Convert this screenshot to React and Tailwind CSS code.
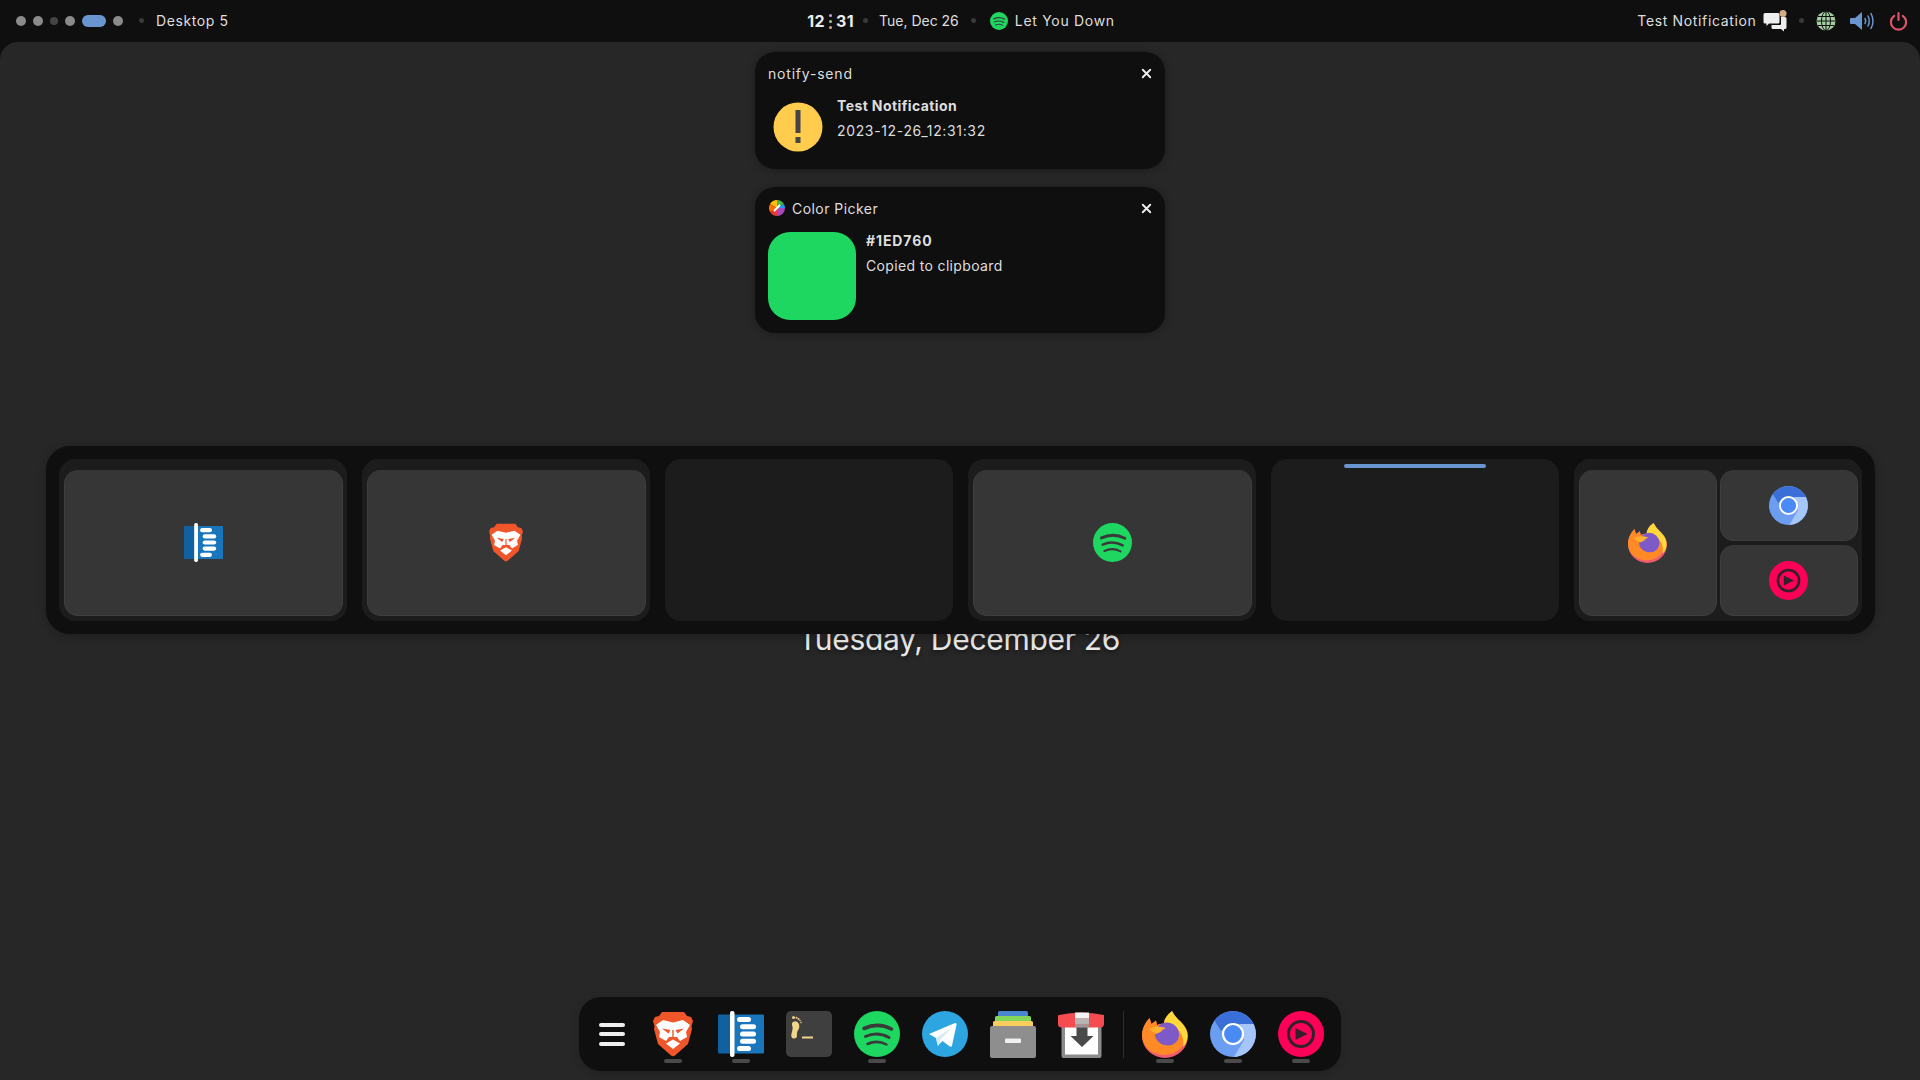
import { X } from "lucide-react"

const BraveIcon = ({ className }) => (
  <svg viewBox="0 0 40 46" className={className}>
    <path fill="#f1562b" d="M9 1H31L34 5L38 6L40 10L38.5 15L39 18L35 33L22 44.5Q20 46 18 44.5L5 33L1 18L1.500 15L0 10L2 6L6 5Z" />
    <path fill="#fff" d="M10 9L20 11.500L30 9L37 14L33 21L34 26L27 30L24 26H16L13 30L6 26L7 21L3 14Z" />
    <path fill="#f1562b" d="M9 17.500L17.500 19L15.500 22.500ZM31 17.500L22.500 19L24.500 22.500ZM19.300 19H20.700V26H19.300Z" />
    <path fill="#fff" d="M13 32.500L20 28.500L27 32.500L20 38Z" />
  </svg>
)

const NotesIcon = ({ className }) => (
  <svg viewBox="0 0 46 46" className={className}>
    <path fill="#11609f" d="M1 3.500H14V42.500H1Q0 42.500 0 41.500V4.500Q0 3.500 1 3.500Z" />
    <path fill="#1a76bc" d="M14 3.500H45Q46 3.500 46 4.500V41.500Q46 42.500 45 42.500H14Z" />
    <rect x="12" y="0" width="4.500" height="46" rx="2" fill="#fff" />
    <rect x="19" y="6" width="14" height="5" rx="2.500" fill="#fff" />
    <rect x="22" y="13.300" width="16" height="5" rx="2.500" fill="#fff" />
    <rect x="22" y="20.500" width="16" height="5" rx="2.500" fill="#fff" />
    <rect x="22" y="27.700" width="16" height="5" rx="2.500" fill="#fff" />
    <rect x="19" y="35" width="14" height="5" rx="2.500" fill="#fff" />
  </svg>
)

const TerminalIcon = ({ className }) => (
  <svg viewBox="0 0 46 46" className={className}>
    <rect width="46" height="46" rx="5" fill="#3f3f3f" />
    <path fill="#f0d58a" d="M7 11Q11 9 13 13Q14 17 11.500 20Q10.500 23 11 25.500Q10.500 28 7 27.500Q4 26 6 21Q7.500 17 6 14Q5.500 12 7 11Z" />
    <circle cx="7.500" cy="6.500" r="1.500" fill="#f0d58a" />
    <circle cx="10.500" cy="6.800" r="1" fill="#f0d58a" />
    <circle cx="12.500" cy="8" r="1" fill="#f0d58a" />
    <circle cx="14" cy="9.500" r=".8" fill="#f0d58a" />
    <circle cx="15" cy="11.500" r=".8" fill="#f0d58a" />
    <rect x="16" y="25.500" width="11" height="2" fill="#f0d58a" />
  </svg>
)

const SpotifyIcon = ({ className }) => (
  <svg viewBox="0 0 46 46" className={className}>
    <circle cx="23" cy="23" r="23" fill="#1ed760" />
    <g fill="none" stroke="#3a3a3a" strokeLinecap="round">
      <path strokeWidth="3.600" d="M10 17.500Q24 11 37.500 18" />
      <path strokeWidth="3" d="M11.500 25.500Q23.500 20 35 26.500" />
      <path strokeWidth="2.500" d="M13.500 33Q23 28.500 32.500 33.500" />
    </g>
  </svg>
)

const TelegramIcon = ({ className }) => (
  <svg viewBox="0 0 46 46" className={className}>
    <circle cx="23" cy="23" r="23" fill="#2ca5e0" />
    <path fill="#fff" d="M7 23L33 12Q35 11.500 34.500 14L30 34.500Q29.500 36.500 27.500 35.300L20.500 30L17 33.500Q16 35.500 15.500 33.500L14 27Z" />
    <path fill="#d5e8f5" d="M14 27L29 17.500L18.500 28.500L17 33.500Q16 35.500 15.500 33.500Z" />
  </svg>
)

const FilesIcon = ({ className }) => (
  <svg viewBox="0 0 46 47" className={className}>
    <path fill="#4a86cf" d="M8 1.500Q8 0 9.500 0H36.500Q38 0 38 1.500V6H8Z" />
    <path fill="#84d65a" d="M5 6.500Q5 5 6.500 5H39.500Q41 5 41 6.500V11H5Z" />
    <path fill="#f9ce5e" d="M3 11.500Q3 10 4.500 10H41.500Q43 10 43 11.500V16H3Z" />
    <rect y="15" width="46" height="32" rx="2" fill="#8e8e8e" />
    <rect x="15" y="27.500" width="16" height="4.500" rx="1" fill="#f0f0f0" />
  </svg>
)

const BoxIcon = ({ className }) => (
  <svg viewBox="0 0 46 47" className={className}>
    <rect x="3.500" y="12" width="40" height="35" rx="2" fill="#8c8c8c" />
    <rect x="7" y="16" width="33" height="27.500" fill="#fff" />
    <path fill="#f44c50" d="M1 4Q12 1.500 23 1.500Q35 1.500 46 4V13Q46 16.500 42 16.500H4Q0 16.500 0 13V5Q0 4 1 4Z" />
    <rect x="17" y="1.500" width="14" height="6" fill="#f4f4f4" />
    <rect x="17" y="7.500" width="14" height="6" fill="#b5b5b5" />
    <rect x="17" y="13.500" width="14" height="3" fill="#9a9a9a" />
    <path fill="#4a4a4a" d="M18.500 16.500H29.500V25H35.500L24 36L12.500 25H18.500Z" />
  </svg>
)

const FirefoxIcon = ({ className }) => (
  <svg viewBox="0 0 46 47" className={className}>
    <path fill="#ef5a6e" d="M7.500 7L9.500 13L14 9.500L15 14Q18 12.500 22 12.500Q22 6 30 0Q33 6 39 11Q46 18 46 25A23 22 0 0 1 0 25Q0 15 7.500 7Z" />
    <path fill="#ff8a26" d="M7.500 7L9.500 13L14 9.500L15 14Q18 12.500 22 12.500L30 14L44 25A22 19.500 0 0 1 0 24Q0 15 7.500 7Z" />
    <path fill="#ffd93b" d="M30 0Q33 6 39 11Q46 18 45.500 26Q45 32 41 36Q43 24 34 17Q27 13 22 12.500Q22 6 30 0Z" />
    <circle cx="25" cy="23.500" r="12" fill="#7e5ac9" />
    <path fill="#ff8a26" d="M13.500 27Q18 35 27 34.500Q32 34 35 30Q31 39 20 38Q12 35 13.500 27Z" />
    <path fill="#ffb22e" d="M7 18Q14 13.500 24 17Q20 18.500 18.500 21L14 23Z" />
  </svg>
)

const ChromiumIcon = ({ className }) => (
  <svg viewBox="0 0 46 46" className={className}>
    <circle cx="23" cy="23" r="23" fill="#6b9ef0" />
    <path fill="#3b6fd8" d="M4.500 9.500A23 23 0 0 1 43.500 13L23 13L11 20Z" />
    <path fill="#a6c5f8" d="M43.500 13A23 23 0 0 1 24 46L34 29L30 13Z" />
    <circle cx="23" cy="23" r="10" fill="#4a8af4" stroke="#fff" strokeWidth="2.200" />
  </svg>
)

const MusicIcon = ({ className }) => (
  <svg viewBox="0 0 46 46" className={className}>
    <circle cx="23" cy="23" r="23" fill="#ff0058" />
    <circle cx="23" cy="23" r="12.500" fill="none" stroke="#33202a" strokeWidth="3" />
    <path fill="#33202a" d="M17.500 17V29L29.500 23Z" />
  </svg>
)

const Dot = () => <span className="block w-[5px] h-[5px] rounded-full bg-[#3a3a3a]" />

const TopBar = () => (
  <div className="grid grid-cols-[1fr_auto_1fr] items-center h-[42px] pb-[1px] text-[14px] tracking-[0.6px] text-[#dedede]">
    <div className="flex items-center pl-4">
      <div className="flex items-center gap-[7px]">
        <span className="w-[10px] h-[10px] rounded-full bg-[#8b8b8b]" />
        <span className="w-[10px] h-[10px] rounded-full bg-[#8b8b8b]" />
        <span className="w-[8px] h-[8px] rounded-full bg-[#444444]" />
        <span className="w-[10px] h-[10px] rounded-full bg-[#8b8b8b]" />
        <span className="w-[24px] h-[12px] rounded-full bg-[#6a96d0]" />
        <span className="w-[10px] h-[10px] rounded-full bg-[#8b8b8b]" />
      </div>
      <span className="ml-[16px] mr-[12px]"><Dot /></span>
      <span>Desktop 5</span>
    </div>
    <div className="flex items-center ml-[2px]">
      <span className="text-[16px] font-bold tracking-[0.4px] text-[#ececec]">12</span>
      <span className="flex flex-col gap-[3px] mx-[4px] mt-[1px]">
        <span className="w-[3px] h-[3px] rounded-full bg-[#c9a3d8]" />
        <span className="w-[3px] h-[3px] rounded-full bg-[#9fc4a0]" />
        <span className="w-[3px] h-[3px] rounded-full bg-[#d3ab85]" />
      </span>
      <span className="text-[16px] font-bold tracking-[0.4px] text-[#ececec]">31</span>
      <span className="flex ml-[9px] mr-[11px]"><Dot /></span>
      <span className="tracking-[0px]">Tue, Dec 26</span>
      <span className="flex ml-[12px] mr-[14px]"><Dot /></span>
      <SpotifyIcon className="w-[18px] h-[18px] mr-[7px]" />
      <span className="tracking-[0.7px]">Let You Down</span>
    </div>
    <div className="flex items-center justify-end pr-3">
      <span className="tracking-[0.65px]">Test Notification</span>
      <svg viewBox="0 0 24 22" className="w-[24px] h-[22px] ml-[6px] mr-[1px]">
        <path fill="#eeeeee" d="M2 3H15Q16.500 3 16.500 4.500V12Q16.500 13.500 15 13.500H6L3.500 16V13.500H2Q.5 13.500 .5 12V4.500Q.5 3 2 3Z" />
        <path fill="#eeeeee" d="M18 7H22Q23.500 7 23.500 8.500V17.500Q23.500 19 22 19H21V21.500L18 19H10Q8.500 19 8.500 17.500V15H17Q18 15 18 14Z" />
        <circle cx="20" cy="3.500" r="3.500" fill="#d3ab85" />
      </svg>
      <span className="flex ml-[11px] mr-[12.500px]"><Dot /></span>
      <svg viewBox="0 0 20 20" className="w-[20px] h-[20px]">
        <circle cx="10" cy="10" r="9.500" fill="#a4cfa0" />
        <g fill="none" stroke="#0f0f0f" strokeWidth="1">
          <ellipse cx="10" cy="10" rx="4.500" ry="9.500" />
          <path d="M10 .5V19.500M.5 10H19.500M2 5.500H18M2 14.500H18" />
        </g>
      </svg>
      <svg viewBox="0 0 24 20" className="w-[24px] h-[20px] ml-[14px]">
        <path fill="#6a96d0" d="M0 8Q0 7 1 7H5L12 1V19L5 13H1Q0 13 0 12Z" />
        <g fill="none" stroke="#6a96d0" strokeLinecap="round">
          <path strokeWidth="1.500" d="M15 7.500Q16.500 10 15 12.500" />
          <path strokeWidth="1.500" d="M18 5Q20.500 10 18 15" />
          <path strokeWidth="1.500" d="M21 2.500Q25 10 21 17.500" />
        </g>
      </svg>
      <svg viewBox="0 0 20 20" className="w-[19px] h-[20px] ml-[15px]">
        <g fill="none" stroke="#e0566f" strokeWidth="2.200" strokeLinecap="round">
          <path d="M10 1.500V9" />
          <path d="M5.500 4.500A8 8 0 1 0 14.500 4.500" />
        </g>
      </svg>
    </div>
  </div>
)

const Notification = ({ icon, title, titleClass, children, className }) => (
  <div className={`relative w-[410px] rounded-[20px] bg-[#0f0f0f] shadow-[0_1px_8px_rgba(0,0,0,0.3)] px-[13px] ${className}`}>
    <div className="flex items-center h-[42px] text-[14px] text-[#dedede]">
      {icon}
      <span className={titleClass}>{title}</span>
      <X size={15} strokeWidth={3} className="ml-auto mr-[-2px] text-[#eeeeee]" />
    </div>
    {children}
  </div>
)

const Workspace = ({ children, active }) => (
  <div className="relative w-[288px] h-[162px] rounded-[16px] bg-[#1c1c1c] flex gap-[3px] pl-[5px] pr-[4px] pt-[11px] pb-[5px]">
    {active && <span className="absolute left-[73px] top-[5px] w-[142px] h-[4px] rounded-sm bg-[#6a96d0]" />}
    {children}
  </div>
)

const Win = ({ children, className }) => (
  <div className={`flex items-center justify-center rounded-[14px] bg-[#363636] border-b border-x border-[#3e3e3e] ${className}`}>
    {children}
  </div>
)

const Indicator = () => <span className="absolute left-1/2 -translate-x-1/2 top-[48px] w-[18px] h-[4px] rounded-full bg-[#4a4a4a]" />

const DockItem = ({ children, running }) => (
  <div className="relative flex items-center justify-center w-[46px] h-[46px]">
    {children}
    {running && <Indicator />}
  </div>
)

const App = () => {
  return (
    <div className="flex flex-col w-screen h-screen overflow-hidden bg-[#0f0f0f] font-['Inter',sans-serif]">
      <TopBar />
      <div className="relative flex flex-1 flex-col items-center rounded-t-[18px] bg-[#272727] pt-[10px]">
        <div className="flex flex-col gap-[18px]">
          <Notification title="notify-send" titleClass="tracking-[0.8px]" className="h-[117px]">
            <div className="flex items-start pl-[5px] pt-[2px]">
              <svg viewBox="0 0 50 50" className="w-[50px] h-[50px] mt-[6px] shrink-0">
                <circle cx="25" cy="25" r="24.500" fill="#ffcc4d" />
                <rect x="22.500" y="8" width="5" height="23" fill="#454545" />
                <rect x="22.500" y="35" width="5" height="6" fill="#454545" />
              </svg>
              <div className="ml-[14px] text-[14px] tracking-[0.3px] text-[#dedede]">
                <div className="font-bold leading-[20px] tracking-[0.4px]">Test Notification</div>
                <div className="mt-[5px] leading-[20px] tracking-[0.65px]">2023-12-26_12:31:32</div>
              </div>
            </div>
          </Notification>
          <Notification
            title="Color Picker"
            titleClass="tracking-[0.45px]"
            className="h-[146px]"
            icon={
              <svg viewBox="0 0 16 16" className="w-[16px] h-[16px] ml-[1px] mr-[7px]">
                <path fill="#ffc107" d="M8 8V0A8 8 0 0 0 1.100 4Z" />
                <path fill="#4caf50" d="M8 8V0A8 8 0 0 1 14.900 4Z" />
                <path fill="#ab47bc" d="M8 8H16A8 8 0 0 1 8 16Z" />
                <path fill="#e53935" d="M8 8V16A8 8 0 0 1 1.100 12Z" />
                <path fill="#ff6f00" d="M8 8L1.100 12A8 8 0 0 1 1.100 4Z" />
                <path fill="#2196f3" d="M8 8L14.900 4A8 8 0 0 1 16 8Z" />
                <path stroke="#fff" strokeWidth="2" d="M5 11L11 5" />
              </svg>
            }
          >
            <div className="flex items-start pt-[3px]">
              <div className="w-[88px] h-[88px] rounded-[22px] bg-[#1ed760] shrink-0" />
              <div className="ml-[10px] text-[14px] tracking-[0.35px] text-[#dedede]">
                <div className="font-bold leading-[20px] -mt-[1px] tracking-[0.9px]">#1ED760</div>
                <div className="mt-[5px] leading-[20px]">Copied to clipboard</div>
              </div>
            </div>
          </Notification>
        </div>

        <div className="relative z-10 mt-[113px] flex gap-[15px] rounded-[24px] bg-[#0f0f0f] p-[13px] shadow-[0_2px_10px_rgba(0,0,0,0.25)]">
          <Workspace>
            <Win className="flex-1"><NotesIcon className="w-[39px] h-[39px]" /></Win>
          </Workspace>
          <Workspace>
            <Win className="flex-1"><BraveIcon className="w-[34px] h-[39px]" /></Win>
          </Workspace>
          <Workspace />
          <Workspace>
            <Win className="flex-1"><SpotifyIcon className="w-[39px] h-[39px]" /></Win>
          </Workspace>
          <Workspace active />
          <Workspace>
            <Win className="w-[138px]"><FirefoxIcon className="w-[39px] h-[40px]" /></Win>
            <div className="flex flex-col flex-1 gap-[4px]">
              <Win className="flex-1"><ChromiumIcon className="w-[39px] h-[39px]" /></Win>
              <Win className="flex-1"><MusicIcon className="w-[39px] h-[39px]" /></Win>
            </div>
          </Workspace>
        </div>

        <div className="absolute left-0 right-0 top-[579px] pr-[2px] text-center text-[30px] leading-[36px] font-normal tracking-[-0.3px] text-[#e8e8e8] [text-shadow:0_2px_4px_rgba(0,0,0,0.5)]">
          Tuesday, December 26
        </div>

        <div className="relative mt-auto mb-[9px] flex items-center gap-[22px] w-[762px] h-[74px] rounded-[22px] bg-[#0f0f0f] pl-[20px] shadow-[0_2px_10px_rgba(0,0,0,0.2)]">
          <div className="flex flex-col gap-[5.500px] w-[26px] mr-[3px]">
            <span className="h-[4px] rounded-full bg-[#efefef]" />
            <span className="h-[4px] rounded-full bg-[#efefef]" />
            <span className="h-[4px] rounded-full bg-[#efefef]" />
          </div>
          <DockItem running><BraveIcon className="w-[40px] h-[46px]" /></DockItem>
          <DockItem running><NotesIcon className="w-[46px] h-[46px]" /></DockItem>
          <DockItem><TerminalIcon className="w-[46px] h-[46px]" /></DockItem>
          <DockItem running><SpotifyIcon className="w-[46px] h-[46px]" /></DockItem>
          <DockItem><TelegramIcon className="w-[46px] h-[46px]" /></DockItem>
          <DockItem><FilesIcon className="w-[46px] h-[47px]" /></DockItem>
          <DockItem><BoxIcon className="w-[46px] h-[47px]" /></DockItem>
          <span className="w-px h-[47px] bg-[#2e2e2e] -ml-[3px] -mr-[4px]" />
          <DockItem running><FirefoxIcon className="w-[46px] h-[47px]" /></DockItem>
          <DockItem running><ChromiumIcon className="w-[46px] h-[46px]" /></DockItem>
          <DockItem running><MusicIcon className="w-[46px] h-[46px]" /></DockItem>
        </div>
      </div>
    </div>
  )
}

export default App
